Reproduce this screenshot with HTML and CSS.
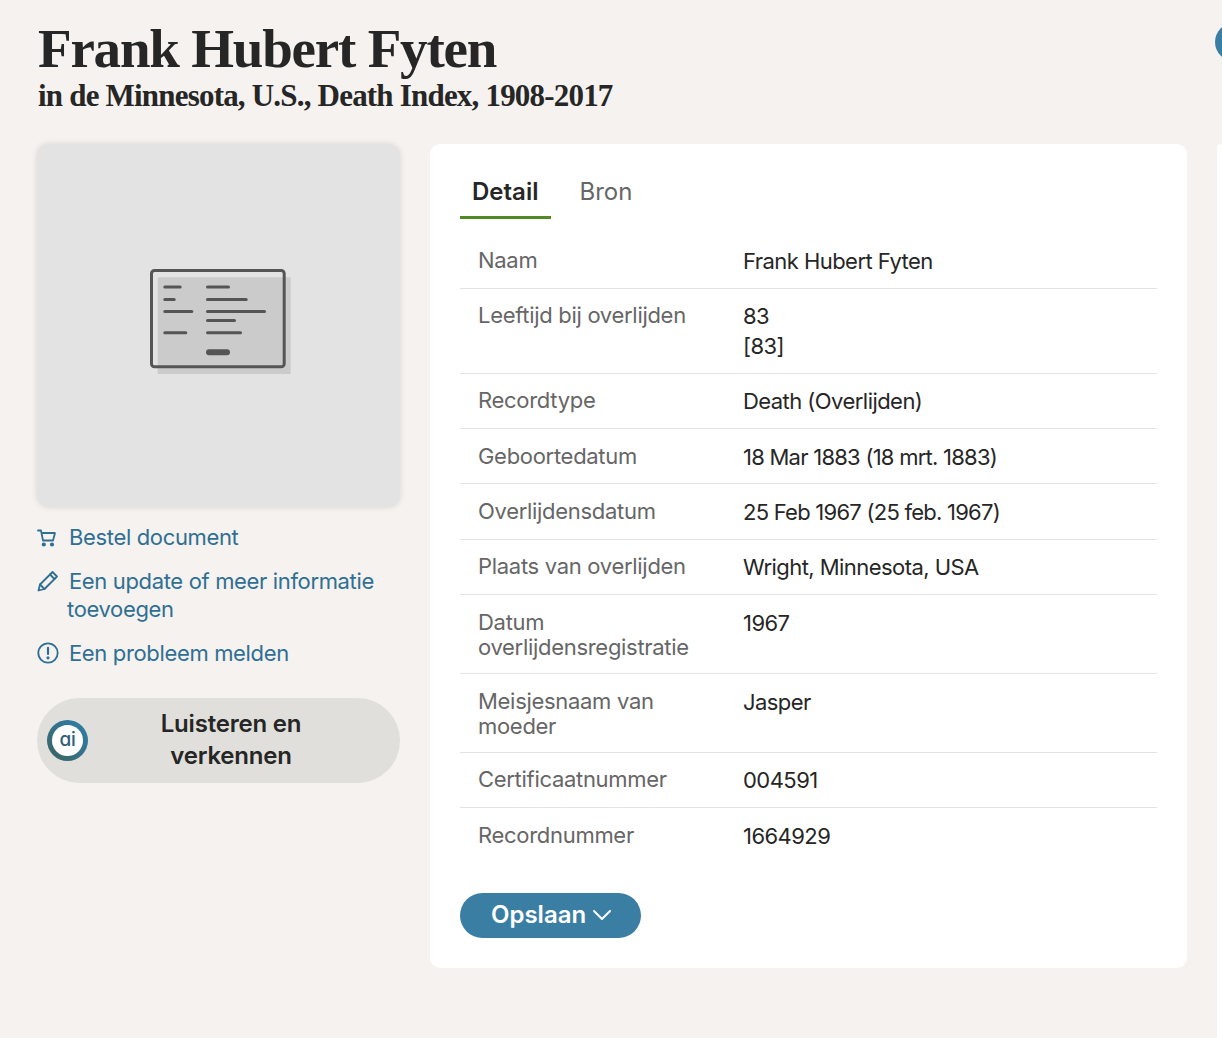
FILE: index.html
```html
<!DOCTYPE html>
<html lang="nl">
<head>
    <meta charset="UTF-8">
    <meta name="viewport" content="width=device-width, initial-scale=1.0">
    <title>Frank Hubert Fyten</title>
    <link rel="stylesheet" href="styles.css">
</head>
<body>

    <svg class="user-dot" width="7" height="38" viewBox="0 0 7 38">
        <circle cx="19" cy="19" r="19" fill="#3b7ea4"/>
    </svg>

    <header class="page-title">
        <h1>Frank Hubert Fyten</h1>
        <h2>in de Minnesota, U.S., Death Index, 1908-2017</h2>
    </header>

    <div class="columns">
        <aside class="side">
            <div class="record-image">
                <svg width="144" height="108" viewBox="0 0 144 108">
                    <rect x="9.700" y="9.300" width="133" height="96.700" fill="#cbcbcb"/>
                    <rect x="3.500" y="2.500" width="132.700" height="96.300" rx="3" fill="none" stroke="#555" stroke-width="3"/>
                    <g stroke="#555" stroke-width="3" stroke-linecap="round">
                        <path d="M16.800 19H32.200"/>
                        <path d="M16.800 31.500H26.200"/>
                        <path d="M16.800 43.500H43.800"/>
                        <path d="M16.800 64.700H37.800"/>
                        <path d="M59.500 19H80.500"/>
                        <path d="M59.500 31.500H98.200"/>
                        <path d="M59.500 43.500H116.500"/>
                        <path d="M59.500 52.500H86.500"/>
                        <path d="M59.500 64.700H92.500"/>
                    </g>
                    <path d="M61 84.300H79" stroke="#555" stroke-width="6" stroke-linecap="round"/>
                </svg>
            </div>

            <a class="side-link" href="#">
                <svg class="side-icon cart-icon" width="20" height="20" viewBox="0 0 20 20" fill="none" stroke="#2f6f93" stroke-width="1.800" stroke-linecap="round" stroke-linejoin="round">
                    <path d="M1 2.500H4L6 12.500H16L18 5H4.500"/>
                    <circle cx="6.800" cy="16.500" r="1.200" fill="#2f6f93"/>
                    <circle cx="15" cy="16.500" r="1.200" fill="#2f6f93"/>
                </svg>Bestel document
            </a>
            <a class="side-link" href="#">
                <svg class="side-icon" width="22" height="22" viewBox="0 0 22 22" fill="none" stroke="#2f6f93" stroke-width="1.800" stroke-linecap="round" stroke-linejoin="round">
                    <path d="M1.500 20.500L3 14.500L15.500 2L20 6.500L7.500 19Z"/>
                    <path d="M13 4.500L17.500 9"/>
                    <path d="M3 14.500L7.500 19"/>
                </svg>Een update of meer informatie toevoegen
            </a>
            <a class="side-link" href="#">
                <svg class="side-icon" width="22" height="22" viewBox="0 0 22 22" fill="none" stroke="#2f6f93" stroke-width="1.800" stroke-linecap="round">
                    <circle cx="11" cy="11" r="9.700"/>
                    <path d="M11 5.800V12" stroke-width="2.200"/>
                    <circle cx="11" cy="15.800" r="0.700" fill="#2f6f93"/>
                </svg>Een probleem melden
            </a>

            <button class="listen" type="button">
                <span class="ai-badge"><span class="ai-inner">ai</span></span>
                <span class="listen-text">Luisteren en verkennen</span>
            </button>
        </aside>

        <main class="card">
            <nav class="tabs">
                <a class="tab tab-active" href="#">Detail</a>
                <a class="tab" href="#">Bron</a>
            </nav>

            <table class="facts">
                <tr><th>Naam</th><td>Frank Hubert Fyten</td></tr>
                <tr><th>Leeftijd bij overlijden</th><td>83<br>[83]</td></tr>
                <tr><th>Recordtype</th><td>Death (Overlijden)</td></tr>
                <tr><th>Geboortedatum</th><td class="date">18 Mar 1883 (18 mrt. 1883)</td></tr>
                <tr><th>Overlijdensdatum</th><td class="date">25 Feb 1967 (25 feb. 1967)</td></tr>
                <tr><th>Plaats van overlijden</th><td>Wright, Minnesota, USA</td></tr>
                <tr><th>Datum overlijdensregistratie</th><td>1967</td></tr>
                <tr><th>Meisjesnaam van moeder</th><td>Jasper</td></tr>
                <tr><th>Certificaatnummer</th><td>004591</td></tr>
                <tr><th>Recordnummer</th><td>1664929</td></tr>
            </table>

            <button class="save" type="button"><span class="save-text">Opslaan</span>
                <svg width="20" height="12" viewBox="0 0 20 12" fill="none" stroke="#fff" stroke-width="2" stroke-linecap="round" stroke-linejoin="round">
                    <path d="M2 2L10 10L18 2"/>
                </svg>
            </button>
        </main>

        <div class="next-panel"></div>
    </div>

</body>
</html>
```

FILE: styles.css
```css
html,
body {
    height: 100%;
}

body {
    font-family: Inter, Arial, sans-serif;
    font-size: 22px;
    background-color: #f5f2ef;
    color: #262626;
    margin: 0;
    overflow: hidden;
    position: relative;
}

.user-dot {
    position: absolute;
    right: 0;
    top: 23px;
}

.page-title {
    padding: 19px 0 0 38px;
    height: 144px;
    box-sizing: border-box;
}

.page-title h1 {
    font-family: "Liberation Serif", serif;
    font-size: 55px;
    line-height: 60px;
    font-weight: bold;
    letter-spacing: -1.2px;
    margin: 0;
}

.page-title h2 {
    font-family: "Liberation Serif", serif;
    font-size: 31px;
    line-height: 34px;
    font-weight: bold;
    letter-spacing: -0.8px;
    margin: 0;
}

.columns {
    display: grid;
    grid-template-columns: 363px 757px 1fr;
    column-gap: 30px;
    padding-left: 37px;
    align-items: start;
}

.record-image {
    height: 363px;
    box-sizing: border-box;
    padding: 0 0 7px 3px;
    background-color: #e3e3e3;
    border-radius: 12px;
    box-shadow: 0px 0px 6px rgba(0, 0, 0, 0.12);
    display: flex;
    align-items: center;
    justify-content: center;
    margin-bottom: 16px;
}

.side-link {
    display: block;
    color: #2f6f93;
    text-decoration: none;
    line-height: 28px;
    letter-spacing: -0.35px;
    padding-left: 30px;
    margin-bottom: 16px;
}

.side-icon {
    margin-left: -30px;
    margin-right: 10px;
    vertical-align: -3px;
}

.cart-icon {
    margin-right: 12px;
}

.listen {
    display: flex;
    align-items: center;
    width: 363px;
    height: 85px;
    margin-top: 31px;
    padding: 0 10px;
    border: none;
    border-radius: 43px;
    background-color: #e0dfdb;
    color: #262626;
    font-family: Inter, Arial, sans-serif;
    font-size: 24px;
    line-height: 32px;
    font-weight: 600;
    letter-spacing: -0.2px;
}

.ai-badge {
    flex: none;
    width: 41px;
    height: 41px;
    padding: 5px;
    box-sizing: border-box;
    border-radius: 50%;
    background: linear-gradient(45deg, #3a6360, #2f7fae);
}

.ai-inner {
    display: block;
    height: 31px;
    border-radius: 50%;
    background-color: #fff;
    color: #2f5f78;
    font-size: 19px;
    line-height: 30px;
    font-weight: 500;
    font-feature-settings: "cv11";
    text-align: center;
}

.listen-text {
    flex: 1;
    padding: 0 48px 2px 32px;
    text-align: center;
}

.card {
    background-color: #fff;
    border-radius: 10px;
    padding: 30px;
    height: 824px;
    box-sizing: border-box;
}

.tabs {
    display: flex;
    gap: 16.500px;
}

.tab {
    padding: 1px 12px 7px;
    line-height: 34px;
    font-size: 24px;
    color: #666;
    text-decoration: none;
    border-bottom: 3px solid transparent;
}

.tab-active {
    color: #262626;
    font-weight: 600;
    padding-right: 12.500px;
    border-bottom-color: #4f8a23;
}

.facts {
    width: 100%;
    border-collapse: collapse;
    margin-top: 14.400px;
    margin-bottom: 30px;
}

.facts tr {
    border-bottom: 1px solid #e3e3e3;
}

.facts tr:last-child {
    border-bottom: none;
}

.facts th,
.facts td {
    vertical-align: top;
    text-align: left;
    font-weight: normal;
}

.facts th {
    width: 229px;
    padding: 14.500px 18px 12.200px;
    color: #666;
    line-height: 25.600px;
    letter-spacing: -0.3px;
}

.facts td {
    padding: 13.500px 18px 11.400px;
    line-height: 29.500px;
    letter-spacing: -0.55px;
}

.facts .date {
    letter-spacing: -0.75px;
}

.save {
    display: flex;
    align-items: center;
    gap: 6px;
    height: 45px;
    padding: 0 29px 0 31px;
    border: none;
    border-radius: 23px;
    background-color: #3b7ea4;
    color: #fff;
    font-family: Inter, Arial, sans-serif;
    font-size: 24px;
    font-weight: 600;
}

.save-text {
    padding-bottom: 2px;
}

.next-panel {
    background-color: #fff;
    border-radius: 10px 10px 0 0;
    height: 894px;
}
```
